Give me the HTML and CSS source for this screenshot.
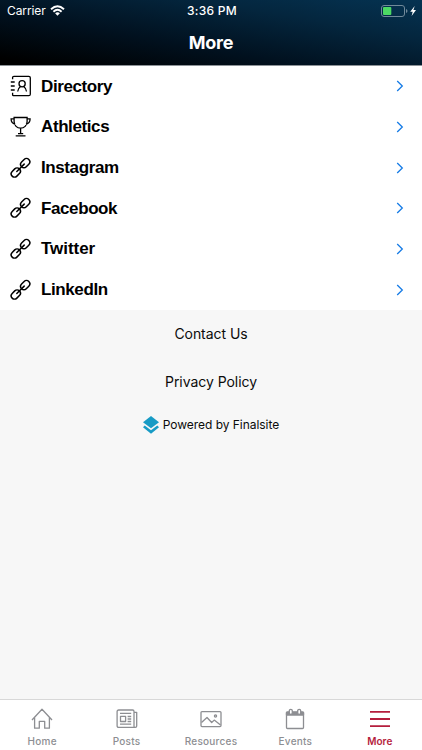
FILE: index.html
```html
<!DOCTYPE html>
<html lang="en">
<head>
<meta charset="utf-8">
<title>More</title>
<link rel="stylesheet" href="styles.css">
</head>
<body>
<svg class="defs" width="0" height="0">
  <symbol id="link" viewBox="0 0 22 22">
    <g fill="none" stroke="currentColor" stroke-width="1.5" stroke-linecap="round">
      <rect x="-5.1" y="-3.3" width="10.2" height="6.6" rx="3.3" transform="translate(5.8 15.5) rotate(-45)"/>
      <rect x="-5.1" y="-3.3" width="10.2" height="6.6" rx="3.3" transform="translate(15.2 6.1) rotate(-45)"/>
      <path d="M6.8 14.5 14.2 7.1"/>
    </g>
  </symbol>
  <symbol id="chevron" viewBox="0 0 8 12">
    <path d="M1.2 1 6.3 6 1.2 11" fill="none" stroke="currentColor" stroke-width="1.3"/>
  </symbol>
</svg>
<div class="app">
  <header class="header">
    <div class="status">
      <div class="carrier"><span>Carrier</span>
        <svg class="wifi" width="15" height="11" viewBox="0 0 15 11"><g fill="none" stroke="#fff" stroke-width="1.9"><path d="M1 4.2Q7.5-1.8 14 4.2"/><path d="M3.4 6.7Q7.5 2.9 11.6 6.7"/></g><path d="M5.1 8.3Q7.5 6.2 9.9 8.3L7.5 10.8Z" fill="#fff"/></svg>
      </div>
      <div class="time">3:36 PM</div>
      <div class="battery">
        <svg width="36" height="12" viewBox="0 0 36 12"><rect x=".5" y=".5" width="23" height="11" rx="2.5" fill="none" stroke="#71899a"/><rect x="2" y="2" width="8.3" height="8" rx="1" fill="#4cd964"/><path d="M25 4Q26.5 4.5 26.5 6T25 8Z" fill="#71899a"/><path d="M33.7 1 29.2 6.8H31.7L30.6 11 35 5.1H32.4Z" fill="#fff"/></svg>
      </div>
    </div>
    <h1 class="title">More</h1>
  </header>
  <ul class="menu">
    <li class="row"><svg class="icon" viewBox="0 0 22 22"><g fill="none" stroke="currentColor" stroke-width="1.3"><path d="M2.6 4.2V2.3Q2.6 1.3 3.9 1.3H18.8Q20.3 1.3 20.3 2.8V19.2Q20.3 20.7 18.8 20.7H3.9Q2.6 20.7 2.6 19.7V17.8M.8 7H4.7M.8 11H4.7M.8 15H4.7"/><circle cx="12.1" cy="8.7" r="3.1"/><path d="M7.7 16.5Q7.9 13.4 10.5 11.5M13.7 11.5Q16.3 13.4 16.5 16.5"/></g></svg><span class="label">Directory</span><svg class="chevron"><use href="#chevron"/></svg></li>
    <li class="row"><svg class="icon" viewBox="0 0 22 22"><g fill="none" stroke="currentColor" stroke-width="1.3"><path d="M4.1 1.5H17.1V5.5C17.1 9.5 14.1 12.2 10.6 12.2S4.1 9.5 4.1 5.5ZM4.1 2.8H1.1Q1 7.2 5.3 8.4M17.1 2.8H20.1Q20.2 7.2 15.9 8.4M10.6 12.2V17.6M8 17.6H13.2M5.7 19.9H15.5"/></g></svg><span class="label">Athletics</span><svg class="chevron"><use href="#chevron"/></svg></li>
    <li class="row"><svg class="icon"><use href="#link"/></svg><span class="label">Instagram</span><svg class="chevron"><use href="#chevron"/></svg></li>
    <li class="row"><svg class="icon"><use href="#link"/></svg><span class="label">Facebook</span><svg class="chevron"><use href="#chevron"/></svg></li>
    <li class="row"><svg class="icon"><use href="#link"/></svg><span class="label label-wide">Twitter</span><svg class="chevron"><use href="#chevron"/></svg></li>
    <li class="row"><svg class="icon"><use href="#link"/></svg><span class="label">LinkedIn</span><svg class="chevron"><use href="#chevron"/></svg></li>
  </ul>
  <main class="footer-links">
    <div class="contact">Contact Us</div>
    <div class="privacy">Privacy Policy</div>
    <div class="powered"><svg width="16" height="18" viewBox="0 0 16 18"><path d="M8 0 16 6.2 8 12.3 0 6.2Z" fill="#179bc5"/><path d="M1.7 9.4 8 14.2 14.3 9.4 16 11.3 8 17.8 0 11.3Z" fill="#179bc5"/></svg><span>Powered by Finalsite</span></div>
  </main>
  <nav class="tabs">
    <div class="tab"><svg class="tab-icon" viewBox="0 0 22 22"><path d="M1 12 11 1.3 21 12M3.6 9.6V20.2H8.3V13.4H13.7V20.2H18.4V9.6"/></svg><span>Home</span></div>
    <div class="tab"><svg class="tab-icon" viewBox="0 0 22 22"><path d="M18 18.2Q18 19.4 19.3 19.4 20.7 19.4 20.7 18V4.3H18M2.7 2H16.6Q18 2 18 3.4V18.2Q18 19.4 19.3 19.4H2.7Q1.1 19.4 1.1 17.8V3.6Q1.1 2 2.7 2ZM4 5.4H15.2M4.5 8.3H9.6V13.5H4.5ZM11.6 8.5H15.2M11.6 11H15.2M11.6 13.5H15.2M4 16.2H15.2"/></svg><span>Posts</span></div>
    <div class="tab"><svg class="tab-icon" viewBox="0 0 22 22"><rect x="1" y="3.6" width="20" height="15" rx="1"/><path d="M1.5 14.5 7 9.5 11.7 14.5 14.2 12.1 20.5 17"/><circle cx="15.5" cy="8" r="1.1"/></svg><span>Resources</span></div>
    <div class="tab"><svg class="tab-icon" viewBox="0 0 22 22"><path d="M2.5 4.3H19.5V7H2.5Z" fill="currentColor"/><rect x="2.5" y="4" width="17" height="16.5" rx="1"/><g fill="#fff"><rect x="5.3" y="1.3" width="3" height="5" rx="1.5"/><rect x="13.7" y="1.3" width="3" height="5" rx="1.5"/></g></svg><span>Events</span></div>
    <div class="tab active"><svg class="tab-icon" viewBox="0 0 22 22"><path d="M1 3.9H21M1 11H21M1 18.1H21" stroke-width="1.8"/></svg><span>More</span></div>
  </nav>
</div>
</body>
</html>
```
FILE: styles.css
```css
* { box-sizing: border-box; }
body { margin: 0; font-family: Inter, sans-serif; color: #0b0b0b; }
.defs { position: absolute; }
.app { width: 422px; height: 750px; display: flex; flex-direction: column; background: #f7f7f7; overflow: hidden; }
.header { height: 66px; color: #fff; background: linear-gradient(190deg, #053352 0%, #04263e 28%, #01111f 62%, #000 95%); border-bottom: 1px solid #8c9297; }
.status { display: grid; grid-template-columns: 1fr auto 1fr; align-items: center; height: 22px; padding: 0 5px 0 7px; font-size: 12px; line-height: 22px; }
.carrier { display: flex; align-items: center; gap: 4px; letter-spacing: -.1px; }
.wifi { margin-bottom: 1px; }
.time { font-weight: 500; letter-spacing: .25px; }
.battery { display: flex; justify-content: flex-end; }
.title { margin: 10px 0 0; font-size: 18px; line-height: 22px; font-weight: 700; text-align: center; letter-spacing: -.2px; }
.menu { margin: 0; padding: 0; list-style: none; height: 244px; display: grid; grid-template-rows: repeat(6, 1fr); background: #fff; }
.row { display: flex; align-items: center; padding: 0 18px 0 10px; font: bold 17px/22px "Liberation Sans", sans-serif; color: #000; }
.icon { width: 22px; height: 22px; margin-right: 9px; }
.label { flex: 1; padding-top: 1px; letter-spacing: -.4px; }
.label-wide { letter-spacing: -.05px; }
.chevron { width: 8px; height: 12px; color: #157be6; }
.footer-links { flex: 1; display: flex; flex-direction: column; align-items: center; padding-top: 13px; }
.contact, .privacy { font-size: 14px; line-height: 22px; letter-spacing: -.05px; }
.privacy { margin-top: 26px; }
.powered { display: flex; align-items: center; gap: 4px; margin-top: 22px; font-size: 12px; line-height: 20px; letter-spacing: -.04px; }
.tabs { height: 51px; display: grid; grid-template-columns: repeat(5, 1fr); background: #fff; border-top: 1px solid #d8d8d8; }
.tab { display: flex; flex-direction: column; align-items: center; padding-top: 8px; color: #8d8e92; font-size: 10px; line-height: 14px; font-weight: 500; letter-spacing: .25px; }
.tab-icon { width: 22px; height: 22px; margin-bottom: 4px; fill: none; stroke: currentColor; stroke-width: 1.3; stroke-linejoin: round; }
.active { color: #b51e3d; font-weight: 600; letter-spacing: .05px; }
```
